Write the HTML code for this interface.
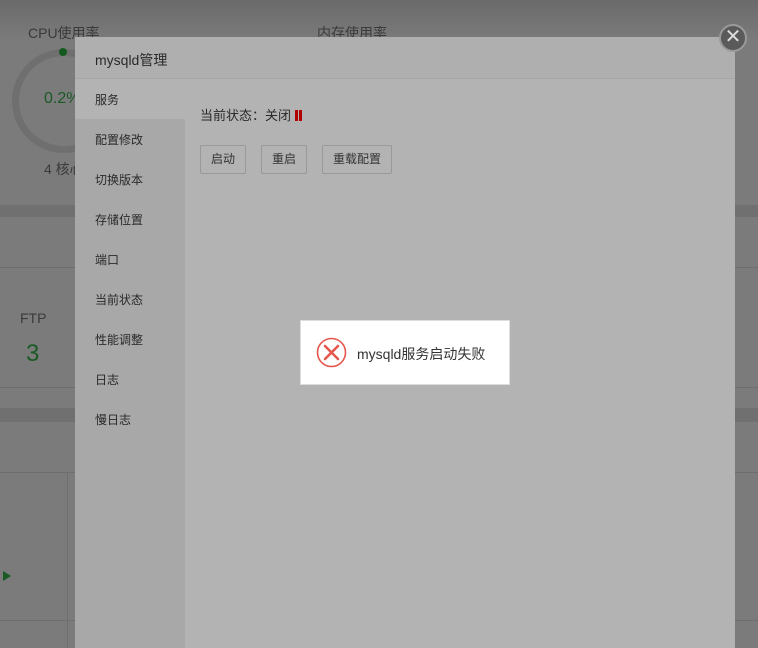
<!DOCTYPE html>
<html><head><meta charset="utf-8"><style>
*{margin:0;padding:0;box-sizing:border-box}
body{width:758px;height:648px;overflow:hidden;background:#7b7b7b;font-family:"Liberation Sans","Noto Sans CJK SC",sans-serif;position:relative}
.abs{position:absolute}
.mod{left:75px;top:37px;width:660px;height:611px;background:#b3b3b3}
.hd{left:0;top:0;width:660px;height:42px;background:#afafaf;border-bottom:1px solid #a6a6a6;font-size:14px;color:#2a2a2a;padding:13px 0 0 20px}
.sb{left:0;top:42px;width:110px;height:569px;background:#a8a8a8}
.it{position:absolute;left:20px;font-size:12px;color:#2a2a2a}
.btn{position:absolute;top:145px;height:29px;border:1px solid #999;border-radius:2px;font-size:12px;color:#333;text-align:center;line-height:27px;background:#b3b3b3}
</style></head><body>
<div class="abs" style="left:0;top:0;width:758px;height:40px;background:linear-gradient(#6a6a6a,#7b7b7b)"></div>
<div class="abs" style="left:28px;top:23px;font-size:14px;color:#3a3a3a">CPU使用率</div>
<div class="abs" style="left:317px;top:23px;font-size:14px;color:#3a3a3a">内存使用率</div>
<div class="abs" style="left:12px;top:49px;width:104px;height:104px;border:7px solid #6f6f6f;border-radius:50%"></div>
<div class="abs" style="left:59px;top:48px;width:8px;height:8px;border-radius:50%;background:#145a1f"></div>
<div class="abs" style="left:44px;top:90px;font-size:16px;color:#1a5a25">0.2%</div>
<div class="abs" style="left:44px;top:159px;font-size:14px;color:#3a3a3a">4 核心</div>
<div class="abs" style="left:0;top:205px;width:758px;height:12px;background:#707070"></div>
<div class="abs" style="left:0;top:267px;width:758px;height:1px;background:#6e6e6e"></div>
<div class="abs" style="left:20px;top:310px;font-size:14px;color:#3a3a3a">FTP</div>
<div class="abs" style="left:26px;top:340px;font-size:24px;color:#1a5a25">3</div>
<div class="abs" style="left:0;top:387px;width:758px;height:1px;background:#6e6e6e"></div>
<div class="abs" style="left:0;top:408px;width:758px;height:14px;background:#707070"></div>
<div class="abs" style="left:0;top:472px;width:758px;height:1px;background:#6e6e6e"></div>
<div class="abs" style="left:67px;top:473px;width:1px;height:175px;background:#6e6e6e"></div>
<div class="abs" style="left:0;top:620px;width:758px;height:1px;background:#6e6e6e"></div>
<div class="abs" style="left:3px;top:571px;width:0;height:0;border-left:8px solid #1a5a25;border-top:5px solid transparent;border-bottom:5px solid transparent"></div>
<div class="abs mod">
 <div class="abs hd">mysqld管理</div>
 <div class="abs sb">
  <div class="abs" style="left:0;top:0;width:110px;height:40px;background:#b3b3b3"></div>
  <div class="it" style="top:12px">服务</div>
  <div class="it" style="top:52px">配置修改</div>
  <div class="it" style="top:92px">切换版本</div>
  <div class="it" style="top:132px">存储位置</div>
  <div class="it" style="top:172px">端口</div>
  <div class="it" style="top:212px">当前状态</div>
  <div class="it" style="top:252px">性能调整</div>
  <div class="it" style="top:292px">日志</div>
  <div class="it" style="top:332px">慢日志</div>
 </div>
 <div class="abs" style="left:125px;top:68px;font-size:13px;color:#2a2a2a">当前状态：关闭 <span style="display:inline-block;width:3px;height:11px;background:#b00000;vertical-align:-1px"></span><span style="display:inline-block;width:3px;height:11px;background:#b00000;margin-left:1px;vertical-align:-1px"></span></div>
 <div class="btn" style="left:125px;top:108px;width:46px">启动</div>
 <div class="btn" style="left:186px;top:108px;width:46px">重启</div>
 <div class="btn" style="left:247px;top:108px;width:70px">重载配置</div>
</div>
<div class="abs" style="left:719px;top:24px;width:28px;height:28px;border-radius:50%;background:#5a5a5a;border:2px solid #9a9a9a;color:#ddd;font-size:20px;line-height:22px;text-align:center">✕</div>
<div class="abs" style="left:300px;top:320px;width:210px;height:65px;background:#fff;border:1px solid #ddd">
 <svg class="abs" style="left:15px;top:16px" width="31" height="31" viewBox="0 0 31 31"><circle cx="15.5" cy="15.5" r="14" fill="none" stroke="#e5574d" stroke-width="1.6"/><path d="M9 9L22 22M22 9L9 22" stroke="#e5574d" stroke-width="2.6" stroke-linecap="round"/></svg>
 <div class="abs" style="left:56px;top:23px;font-size:14px;color:#333">mysqld服务启动失败</div>
</div>
</body></html>
